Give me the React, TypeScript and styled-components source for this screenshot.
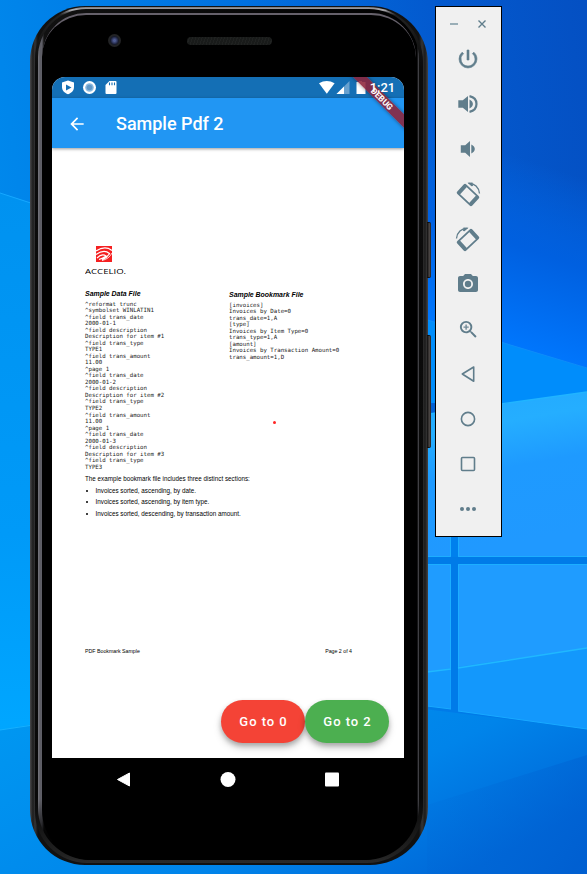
import React from 'react';
import styled, { createGlobalStyle } from 'styled-components';
import { MdArrowBack, MdPhotoCamera, MdPowerSettingsNew, MdZoomIn } from 'react-icons/md';

const GlobalStyle = createGlobalStyle`
  * { box-sizing: border-box; }
  body { margin: 0; overflow: hidden; font-family: Roboto, sans-serif; }
`;

const Desktop = styled.main`
  position: relative;
  width: 587px;
  height: 874px;
  overflow: hidden;
  display: flex;
  align-items: flex-start;
  padding: 6px 0 0 30px;
`;

const WallpaperArt = styled.svg`
  position: absolute;
  inset: 0;
`;

const Phone = styled.section`
  position: relative;
  flex: none;
  width: 398px;
  height: 859px;
  padding: 1px 2px 2px;
  border-radius: 55px 58px 58px 55px;
  background: linear-gradient(90deg, #49494b 0, #1c1c1c 3px, #353536 5px, #111 8px, #111 389px, #353535 392px, #1b1b1b 395px, #454545 398px);
`;

const Bezel = styled.div`
  height: 856px;
  margin: 0 3px;
  padding: 2px 4px 1px 3px;
  border-radius: 51px 55px 56px 52px;
  background: linear-gradient(180deg, #77777b 0, #b4b4b8 3px, #66666a 5px, #222 8px, #0c0c0c 60px, #090909 790px, #222 848px, #2b2b2b);
`;

const Rim = styled.div`
  height: 851px;
  padding: 4px 3px 0 4px;
  border-radius: 48px 50px 54px 52px;
  background:
    linear-gradient(180deg, transparent 790px, #000 835px),
    linear-gradient(90deg, #77777e 0, #5c5c64 2px, #606068 4px, #111 6px, #000 379px, #55555b 381px, #4b4b50 383px, #080808 385px);
`;

const Glass = styled.div`
  height: 847px;
  border-radius: 44px 45px 54px 50px;
  border-top: 2px solid #66616b;
  background: #000;
  padding: 0 9px 0 10px;
`;

const Earpiece = styled.div`
  height: 62px;
  padding: 19px 0 0 56px;
  display: flex;
  align-items: flex-start;
  gap: 66px;
`;

const Lens = styled.i`
  width: 13px;
  height: 13px;
  border-radius: 50%;
  background: radial-gradient(circle, #4d5a91 0 1px, #293052 3px, #171b2c 4px, #222325 5px 7px);
`;

const Speaker = styled.i`
  width: 85px;
  height: 8px;
  margin-top: 3px;
  border-radius: 4px;
  background: repeating-linear-gradient(110deg, #191b1a 0 2px, #202221 2px 3px);
`;

const SideKey = styled.i<{ $top: number; $height: number }>`
  position: absolute;
  left: 397px;
  top: ${p => p.$top}px;
  width: 4px;
  height: ${p => p.$height}px;
  border-radius: 0 2px 2px 0;
  background: linear-gradient(90deg, #0c0c0c, #4b4644 60%, #222);
  border-top: 1px solid #111;
  border-bottom: 1px solid #111;
`;

const Screen = styled.div`
  position: relative;
  width: 352px;
  height: 681px;
  border-radius: 13px 13px 0 0;
  overflow: hidden;
  background: #fff;
  display: flex;
  flex-direction: column;
`;

const StatusBar = styled.header`
  flex: none;
  height: 21px;
  background: #146fb5;
  display: flex;
  justify-content: space-between;
  padding: 0 9px 0 9px;
`;

const Clock = styled.time`
  position: absolute;
  z-index: 3;
  right: 9px;
  top: 3px;
  color: #fff;
  font: 500 13px/16px Roboto, sans-serif;
  letter-spacing: -0.1px;
`;

const AppBar = styled.header`
  position: relative;
  flex: none;
  height: 50px;
  background: #2196f3;
  color: #fff;
  display: flex;
  align-items: center;
  padding: 1px 0 0 15px;
  gap: 29px;
  box-shadow: 0 1px 3px rgba(0, 0, 0, .4);
`;

const Title = styled.h1`
  margin: 1px 0 0;
  font: 500 18px/22px Roboto, sans-serif;
  letter-spacing: -.01px;
`;

const DebugBanner = styled.div`
  position: absolute;
  z-index: 2;
  left: 280px;
  top: 16.500px;
  width: 100px;
  height: 10px;
  transform: rotate(45deg);
  background: rgba(142, 36, 58, .88);
  box-shadow: 0 0 4px rgba(0, 0, 0, .45);
  color: #fff;
  font: 700 8.500px/10px Roboto, sans-serif;
  text-align: center;
`;

const Page = styled.article`
  flex: 1;
  color: #000;
  padding: 97px 33px 0;
  display: flex;
  flex-direction: column;
  position: relative;
`;

const Brand = styled.div`
  height: 45px;
  display: flex;
  flex-direction: column;
  align-items: flex-start;
`;

const BrandMark = styled.svg`
  margin-left: 11px;
  margin-top: .5px;
  flex: none;
`;

const BrandName = styled.span`
  margin-top: 6px;
  font: 400 6.400px/8px "Open Sans", sans-serif;
  transform: scaleX(1.5);
  transform-origin: left;
`;

const Columns = styled.div`
  display: grid;
  grid-template-columns: 144px 1fr;
  height: 184.500px;
`;

const FileColumn = styled.section<{ $drop?: number }>`
  padding-top: ${p => p.$drop || 0}px;
`;

const FileTitle = styled.h2`
  margin: 0 0 2.500px;
  font: italic 700 6.950px/8px "Liberation Sans", sans-serif;
  white-space: nowrap;
`;

const Code = styled.pre`
  margin: 0;
  font: 400 5.720px/6.530px "DejaVu Sans Mono", monospace;
  color: #222;
`;

const Summary = styled.p`
  margin: 0;
  font: 400 6.280px/8px "Liberation Sans", sans-serif;
  letter-spacing: .02px;
  white-space: nowrap;
`;

const Bullets = styled.ul`
  margin: 4px 0 0;
  padding: 0;
  list-style: none;
  display: flex;
  flex-direction: column;
  gap: 3.750px;
`;

const Bullet = styled.li`
  display: flex;
  align-items: center;
  gap: 8px;
  height: 8px;
  font: 400 6.300px/8px "Liberation Sans", sans-serif;
  white-space: nowrap;
  &::before { content: ''; width: 2px; height: 2px; margin-left: .5px; border-radius: 50%; background: #000; }
`;

const Footer = styled.footer`
  display: flex;
  justify-content: space-between;
  margin-top: 129px;
  padding-right: 19px;
  font: 400 5.250px/8px "Liberation Sans", sans-serif;
`;

const Spot = styled.i`
  position: absolute;
  left: 221px;
  top: 273px;
  width: 3px;
  height: 3px;
  border-radius: 50%;
  background: #ff2525;
`;

const Actions = styled.div`
  display: flex;
  margin: 45px 0 0 136px;
`;

const PillButton = styled.button<{ $color: string }>`
  flex: none;
  width: 84px;
  height: 43px;
  border: 0;
  padding: 0 0 0 1px;
  border-radius: 21.500px;
  background: ${p => p.$color};
  color: #fff;
  font: 500 13px/43px Roboto, sans-serif;
  letter-spacing: .95px;
  box-shadow: 0 3px 5px rgba(0, 0, 0, .25), 0 5px 9px rgba(0, 0, 0, .14);
`;

const NavBar = styled.nav`
  display: flex;
  justify-content: space-between;
  padding: 14px 67px 0 64px;
  width: 355px;
`;

const Toolbar = styled.aside`
  position: relative;
  flex: none;
  margin-left: 7px;
  width: 67px;
  height: 531px;
  border: 1px solid #000;
  background: #f0f0f0;
  color: #607d8b;
`;

const WindowControls = styled.div`
  height: 29.500px;
  display: flex;
  align-items: center;
  justify-content: space-between;
  padding: 4px 14px 0;
`;

const ToolButton = styled.button`
  width: 64px;
  height: 45px;
  border: 0;
  padding: 0;
  background: none;
  color: inherit;
  display: flex;
  align-items: center;
  justify-content: center;
`;

const PowerIcon = styled(MdPowerSettingsNew)`
  path:last-child { stroke-width: .6px; }
`;

const ZoomIcon = styled(MdZoomIn)`
  path:last-child { stroke-width: .3px; }
`;

const Wallpaper = () => (
  <WallpaperArt width="587" height="874" viewBox="0 0 587 874">
    <defs>
      <linearGradient id="sky" x1="0" y1=".25" x2="1" y2=".05">
        <stop offset="0" stopColor="#0088ec" /><stop offset=".45" stopColor="#0070e0" /><stop offset=".75" stopColor="#035acf" /><stop offset="1" stopColor="#0450c3" />
      </linearGradient>
      <linearGradient id="glow" gradientUnits="userSpaceOnUse" x1="560" y1="170" x2="500" y2="350">
        <stop offset="0" stopColor="#0068e8" stopOpacity="0" /><stop offset=".45" stopColor="#0060e0" /><stop offset="1" stopColor="#0078ff" />
      </linearGradient>
      <linearGradient id="left" x1="0" y1="0" x2="0" y2="1">
        <stop offset="0" stopColor="#0092f0" /><stop offset=".5" stopColor="#009af8" /><stop offset=".78" stopColor="#00a6ff" /><stop offset="1" stopColor="#009df0" />
      </linearGradient>
      <linearGradient id="pane" x1="0" y1="0" x2=".2" y2="1">
        <stop offset="0" stopColor="#22a8ff" /><stop offset=".28" stopColor="#25aeff" /><stop offset=".55" stopColor="#1e9aff" /><stop offset="1" stopColor="#2099ff" />
      </linearGradient>
      <linearGradient id="low" x1="0" y1="0" x2="1" y2=".7">
        <stop offset="0" stopColor="#009cf3" /><stop offset=".7" stopColor="#0084ea" /><stop offset="1" stopColor="#0068d8" />
      </linearGradient>
      <linearGradient id="shade" gradientUnits="userSpaceOnUse" x1="450" y1="790" x2="570" y2="874">
        <stop offset="0" stopColor="#006ad8" stopOpacity=".2" /><stop offset="1" stopColor="#005cce" stopOpacity=".7" />
      </linearGradient>
    </defs>
    <path fill="url(#sky)" d="M0 0h587v874H0z" />
    <path fill="url(#glow)" d="M400 100h187v268l-187-55z" />
    <path fill="url(#left)" d="M0 193l160 52v629H0z" />
    <path d="M0 193l40 13" stroke="#16a8ff" strokeWidth="1" />
    <path fill="#008dfb" d="M400 311l187 57v35H400z" />
    <path d="M427 320l160 48" stroke="#0d8df9" />
    <path fill="url(#low)" d="M0 730l400-70h187v214H0z" />
    <path d="M0 730l40-6" stroke="#15b1ff" />
    <path fill="#007be8" d="M400 530h187v199l-187-23z" />
    <path fill="url(#pane)" d="M400 418l187-26v165H458v-20h-7v20h-51z" />
    <path fill="#1f9cff" d="M400 564h51v145l-51-7zM458 564h129v165l-129-18z" />
    <path d="M400 418l187-26" stroke="#21b4ff" strokeWidth="1.300" />
    <path fill="#0080ed" d="M451 537h7v20h-7z" />
    <path d="M427 556.500h23.500V537M458.500 537v19.500H587M427 564.500h23.500V709M458.500 710V564.500H587" fill="none" stroke="#1cbaff" strokeOpacity=".65" />
    <path fill="#0893fa" fillOpacity=".5" d="M427 672l24-4v41l-24-3zM458 667l129-19v81l-129-18z" />
    <path d="M427 672l24-3M458 668l129-20" stroke="#20b8ff" strokeWidth="1.500" />
    <path d="M427 706l24 3M458 711l129 18" stroke="#18a9ff" />
    <path fill="url(#shade)" d="M427 805l160-50v119H427z" />
  </WallpaperArt>
);

const NotificationIcons = () => (
  <svg width="60" height="21" viewBox="0 0 60 21">
    <path fill="#fff" d="M7 3.500l6 2V10c0 3.600-2.400 6-6 7.300C3.400 16 1 13.600 1 10V5.500z" />
    <path fill="#146fb5" d="M5 7.500l5.500 3L5 13.500z" />
    <circle cx="28.500" cy="10.500" r="6.500" fill="#fff" />
    <circle cx="28.500" cy="10.500" r="4.300" fill="#8bb9df" />
    <circle cx="28.500" cy="10.500" r="2.800" fill="#6098c7" />
    <path fill="#fff" d="M48.500 4h6q1 0 1 1v11q0 1-1 1h-9q-1 0-1-1V8z" />
    <path stroke="#146fb5" d="M48.500 5.500v2.700M51 5.500v2.700M53.500 5.500v2.700" strokeWidth="1.100" />
  </svg>
);

const SignalIcons = () => (
  <svg width="80" height="21" viewBox="0 0 80 21">
    <path fill="#fff" d="M4 6.300q7.700-4.800 15.600 0L11.800 16.800z" />
    <path fill="#68a1cf" d="M34.500 4v13H21.500z" />
    <path fill="#fff" d="M29 9.500V17h-7.500z" />
    <path fill="#fff" d="M44 4h3v1h3.500v12h-9V5H44z" />
  </svg>
);

const VolumeUp = () => (
  <svg width="22" height="22" viewBox="0 0 22 22" fill="currentColor">
    <path d="M1.300 7.300h4.500L11 3v16l-5.200-4.300H1.300zM12.500 6.500q3.400 1.800 3.400 4.500t-3.400 4.500z" />
    <path d="M12.500 3.200c9.300 2 9.300 13.600 0 15.600" fill="none" stroke="currentColor" strokeWidth="2.200" />
  </svg>
);

const VolumeDown = () => (
  <svg width="22" height="22" viewBox="0 0 22 22" fill="currentColor">
    <path d="M3.800 7.300h4.400L13 3v16l-4.800-4.300H3.800zM14.300 6.500q3.500 1.800 3.500 4.500t-3.500 4.500z" />
  </svg>
);

const Rotate = ({ right = false }: { right?: boolean }) => (
  <svg width="26" height="26" viewBox="0 0 26 26" fill="currentColor">
    <g transform={right ? 'matrix(-1 0 0 1 25.500 0)' : 'translate(.500 0)'}>
      <g transform="rotate(43 12.500 14)">
        <rect x="3.100" y="8.300" width="18.800" height="11.400" rx="1" fill="none" stroke="currentColor" strokeWidth="1.800" />
        <path d="M3.300 8.600h2.900v10.800H3.300zM18.800 8.600h2.900v10.800h-2.900z" />
      </g>
      <path d="M13 2.400C19 2 23.500 6.500 24 12.500" fill="none" stroke="currentColor" strokeWidth="1.300" />
      <path d="M12 1.700l5-.3.500 3.600-1.500.3z" />
    </g>
  </svg>
);

const dataFile = `^reformat trunc
^symbolset WINLATIN1
^field trans_date
2000-01-1
^field description
Description for item #1
^field trans_type
TYPE1
^field trans_amount
11.00
^page 1
^field trans_date
2000-01-2
^field description
Description for item #2
^field trans_type
TYPE2
^field trans_amount
11.00
^page 1
^field trans_date
2000-01-3
^field description
Description for item #3
^field trans_type
TYPE3`;

const bookmarkFile = `[invoices]
Invoices by Date=0
trans_date=1,A
[type]
Invoices by Item Type=0
trans_type=1,A
[amount]
Invoices by Transaction Amount=0
trans_amount=1,D`;

const sections = [
  'Invoices sorted, ascending, by date.',
  'Invoices sorted, ascending, by item type.',
  'Invoices sorted, descending, by transaction amount.',
];

const tools = [
  { name: 'Power', icon: <PowerIcon size={24} /> },
  { name: 'Volume up', icon: <VolumeUp /> },
  { name: 'Volume down', icon: <VolumeDown /> },
  { name: 'Rotate left', icon: <Rotate /> },
  { name: 'Rotate right', icon: <Rotate right /> },
  { name: 'Screenshot', icon: <MdPhotoCamera size={24} /> },
  { name: 'Zoom', icon: <ZoomIcon size={23} /> },
  { name: 'Back', icon: <svg width="20" height="20" fill="none" stroke="currentColor" strokeWidth="1.600" strokeLinejoin="round"><path d="M4.300 10L15.700 3v14.200z" /></svg> },
  { name: 'Home', icon: <svg width="20" height="20" fill="none" stroke="currentColor" strokeWidth="1.600"><circle cx="10" cy="10" r="6.600" /></svg> },
  { name: 'Overview', icon: <svg width="20" height="20" fill="none" stroke="currentColor" strokeWidth="1.600"><rect x="3.500" y="3.500" width="13" height="13" rx="1" /></svg> },
  { name: 'More', icon: <svg width="20" height="20" fill="currentColor"><circle cx="4" cy="10" r="2" /><circle cx="10" cy="10" r="2" /><circle cx="16" cy="10" r="2" /></svg> },
];

export default function App() {
  return (
    <Desktop>
      <GlobalStyle />
      <Wallpaper />
      <Phone>
        <SideKey $top={216} $height={56} />
        <SideKey $top={329} $height={113} />
        <Bezel><Rim><Glass>
          <Earpiece><Lens /><Speaker /></Earpiece>
          <Screen>
            <StatusBar><NotificationIcons /><SignalIcons /></StatusBar>
            <AppBar><MdArrowBack size={20} /><Title>Sample Pdf 2</Title></AppBar>
            <DebugBanner>DEBUG</DebugBanner>
            <Clock>1:21</Clock>
            <Page>
              <Brand>
                <BrandMark width="16" height="16" viewBox="0 0 16 16">
                  <path fill="#f51f20" d="M0 0h16v16H0z" />
                  <path d="M0 5Q9-1 16 4.500M0 8.500Q8 3 13.500 7.500Q11 12 6 14M1 12Q6 7 10 10Q8 12 3 13.500" fill="none" stroke="#fff" strokeWidth="1.200" />
                  <path d="M6 14.500Q13 13 16 7" fill="none" stroke="#fff" strokeWidth=".8" />
                </BrandMark>
                <BrandName>ACCELIO.</BrandName>
              </Brand>
              <Columns>
                <FileColumn><FileTitle>Sample Data File</FileTitle><Code>{dataFile}</Code></FileColumn>
                <FileColumn $drop={1}><FileTitle>Sample Bookmark File</FileTitle><Code>{bookmarkFile}</Code></FileColumn>
              </Columns>
              <Summary>The example bookmark file includes three distinct sections:</Summary>
              <Bullets>{sections.map(s => <Bullet key={s}>{s}</Bullet>)}</Bullets>
              <Footer><span>PDF Bookmark Sample</span><span>Page 2 of 4</span></Footer>
              <Spot />
              <Actions>
                <PillButton $color="#f44336">Go to 0</PillButton>
                <PillButton $color="#4caf50">Go to 2</PillButton>
              </Actions>
            </Page>
          </Screen>
          <NavBar>
            <svg width="16" height="16"><path d="M1.500 7.500L13.500 1v13z" fill="#fff" stroke="#fff" strokeLinejoin="round" /></svg>
            <svg width="16" height="16"><circle cx="8" cy="7.500" r="7.500" fill="#fff" /></svg>
            <svg width="16" height="16"><rect x="1" y=".500" width="14" height="14" rx="1" fill="#fff" /></svg>
          </NavBar>
        </Glass></Rim></Bezel>
      </Phone>
      <Toolbar>
        <WindowControls>
          <svg width="8" height="8"><path d="M0 4h8" stroke="#9aaeb7" strokeWidth="2" /></svg>
          <svg width="10" height="8"><path d="M1.500.500l7 7M8.500.500l-7 7" stroke="currentColor" strokeWidth="1.400" /></svg>
        </WindowControls>
        {tools.map(t => <ToolButton key={t.name} aria-label={t.name}>{t.icon}</ToolButton>)}
      </Toolbar>
    </Desktop>
  );
}
